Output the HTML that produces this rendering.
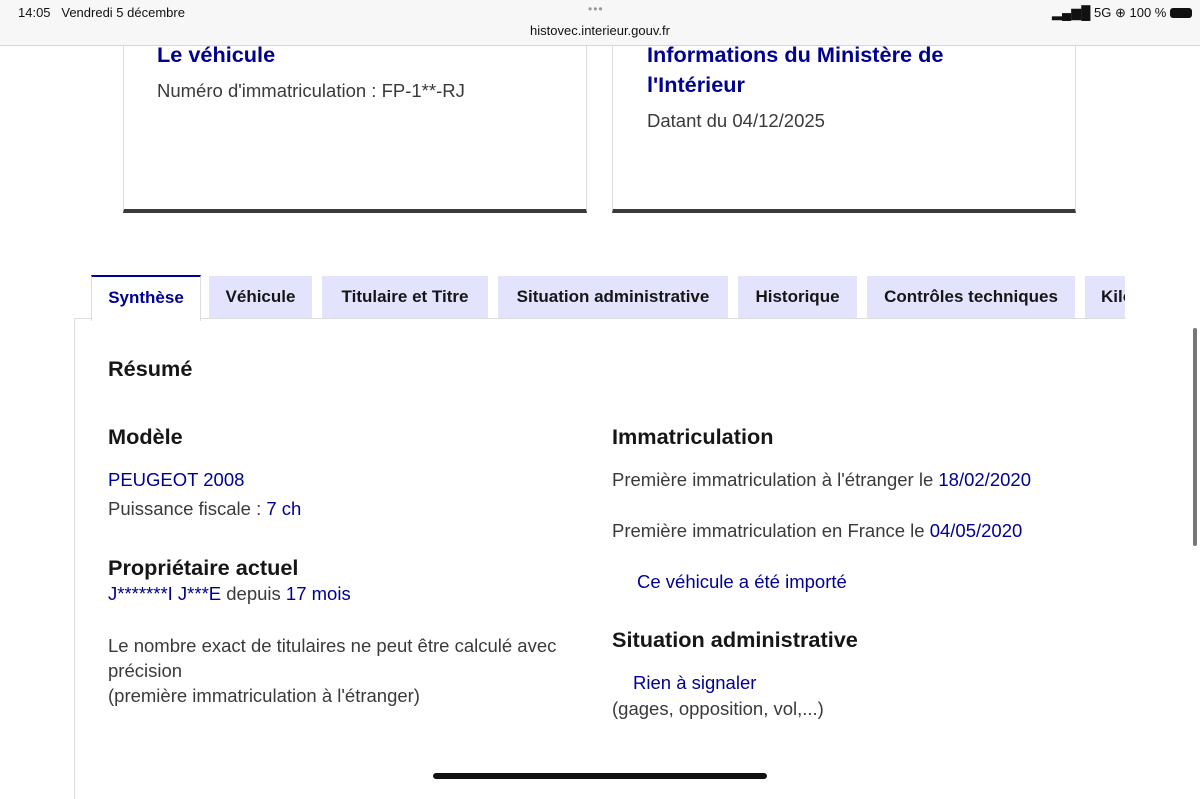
<!DOCTYPE html><html><head><meta charset="utf-8"><style>
body{margin:0;width:1200px;height:788px;overflow:hidden;background:#fff;font-family:"Liberation Sans",sans-serif;position:relative;color:#3a3a3a}
.a{position:absolute;white-space:nowrap}
.b{color:#000091}
.h{font-weight:bold;color:#161616;font-size:21.7px}
.t{font-size:18.5px}
.tab{position:absolute;top:276px;height:42px;background:#e3e3fd;color:#161616;font-weight:bold;font-size:17px;line-height:42px;text-align:center;overflow:hidden}
</style></head><body>
<div class="a" style="left:0;top:0;width:1200px;height:45px;background:#f7f7f7;border-bottom:1px solid #d6d6d6"></div>
<div class="a" style="left:18px;top:5px;font-size:13px;color:#111">14:05&nbsp;&nbsp; Vendredi 5 décembre</div>
<div class="a" style="left:588px;top:2px;font-size:12px;color:#999;letter-spacing:1px">•••</div>
<div class="a" style="left:530px;top:23px;font-size:13px;color:#111">histovec.interieur.gouv.fr</div>
<div class="a" style="left:1052px;top:5px;font-size:13px;color:#111">▂▄▆█ 5G ⊕ 100 % <span style="display:inline-block;width:22px;height:10px;background:#111;border-radius:3px;vertical-align:-1px"></span></div>

<div class="a" style="left:123px;top:46px;width:462px;height:163px;border:1px solid #ddd;border-top:none;border-bottom:4px solid #3a3a3a"></div>
<div class="a" style="left:612px;top:46px;width:462px;height:163px;border:1px solid #ddd;border-top:none;border-bottom:4px solid #3a3a3a"></div>
<div class="a b" style="left:157px;top:42px;font-size:21.7px;font-weight:bold">Le véhicule</div>
<div class="a t" style="left:157px;top:80px">Numéro d'immatriculation : FP-1**-RJ</div>
<div class="a b" style="left:647px;top:40px;font-size:21.7px;font-weight:bold;line-height:30px">Informations du Ministère de<br>l'Intérieur</div>
<div class="a t" style="left:647px;top:110px">Datant du 04/12/2025</div>

<div class="a" style="left:74px;top:318px;width:1051px;height:480px;border-left:1px solid #ddd;border-top:1px solid #ddd"></div>
<div class="tab" style="left:91px;width:108px;background:#fff;border-top:2px solid #000091;color:#000091;top:275px;border-right:1px solid #ddd;border-left:1px solid #ddd;height:44px">Synthèse</div>
<div class="tab" style="left:209px;width:103px">Véhicule</div>
<div class="tab" style="left:322px;width:166px">Titulaire et Titre</div>
<div class="tab" style="left:498px;width:230px">Situation administrative</div>
<div class="tab" style="left:738px;width:119px">Historique</div>
<div class="tab" style="left:867px;width:208px">Contrôles techniques</div>
<div class="tab" style="left:1085px;width:40px;text-align:left;padding-left:16px;box-sizing:border-box">Kilométrage</div>

<div class="a h" style="left:108px;top:356px">Résumé</div>
<div class="a h" style="left:108px;top:424px">Modèle</div>
<div class="a t b" style="left:108px;top:469px">PEUGEOT 2008</div>
<div class="a t" style="left:108px;top:498px">Puissance fiscale : <span class="b">7 ch</span></div>
<div class="a h" style="left:108px;top:555px">Propriétaire actuel</div>
<div class="a t" style="left:108px;top:583px"><span class="b">J*******I J***E</span> depuis <span class="b">17 mois</span></div>
<div class="a t" style="left:108px;top:633px;line-height:25px">Le nombre exact de titulaires ne peut être calculé avec<br>précision<br>(première immatriculation à l'étranger)</div>

<div class="a h" style="left:612px;top:424px">Immatriculation</div>
<div class="a t" style="left:612px;top:469px">Première immatriculation à l'étranger le <span class="b">18/02/2020</span></div>
<div class="a t" style="left:612px;top:520px">Première immatriculation en France le <span class="b">04/05/2020</span></div>
<div class="a t b" style="left:637px;top:571px">Ce véhicule a été importé</div>
<div class="a h" style="left:612px;top:627px">Situation administrative</div>
<div class="a t b" style="left:633px;top:672px">Rien à signaler</div>
<div class="a t" style="left:612px;top:698px">(gages, opposition, vol,...)</div>

<div class="a" style="left:1193px;top:328px;width:4px;height:218px;background:#777;border-radius:2px"></div>
<div class="a" style="left:433px;top:773px;width:334px;height:6px;background:#111;border-radius:3px"></div>
</body></html>
